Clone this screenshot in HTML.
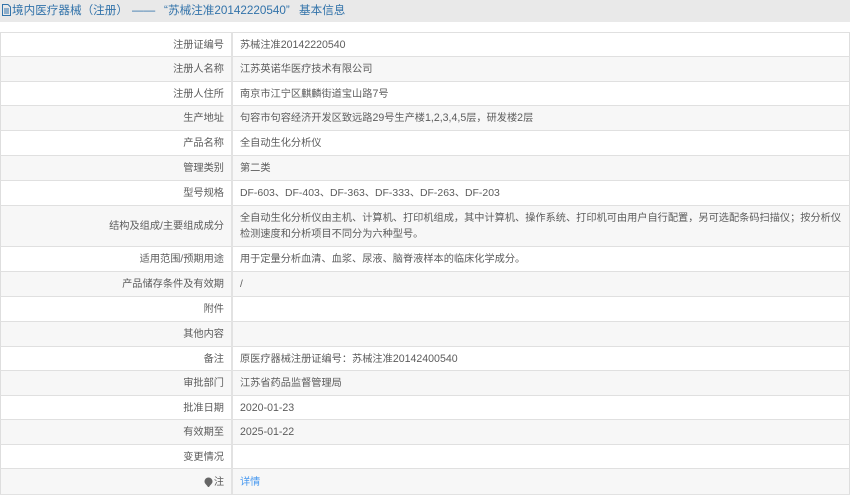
<!DOCTYPE html>
<html lang="zh">
<head>
<meta charset="utf-8">
<style>
html,body{margin:0;padding:0;background:#fff;}
body{width:850px;height:495px;overflow:hidden;position:relative;font-family:"Liberation Sans","Noto Sans CJK SC",sans-serif;color:#5c5c5c;font-size:10.2px;}
#pg{position:absolute;left:0;top:0;width:850px;height:495px;filter:blur(.3px);}
#hd{position:absolute;left:0;top:0;width:850px;height:22px;background:#e9e9e9;}
.t{position:absolute;top:1px;height:19px;line-height:19px;font-size:11.6px;color:#3273aa;white-space:nowrap;}
#ic{position:absolute;left:1px;top:4px;}
.r{position:absolute;left:0;width:850px;box-sizing:border-box;border-top:1px solid #e0e0e0;border-left:1px solid #dedede;border-right:1px solid #dedede;background:#fff;}
.r.e{background:#f7f7f7;}
.l{position:absolute;left:0;width:223px;top:2px;bottom:0;white-space:nowrap;display:flex;align-items:center;justify-content:flex-end;line-height:16px;}
.v{position:absolute;left:239px;width:606px;top:2px;bottom:0;display:flex;align-items:center;line-height:16.5px;white-space:nowrap;}
.v>div{display:block;}
.n{font-size:10.6px;}
.d{font-size:10.45px;}
#dv{position:absolute;left:231px;top:32px;width:1.6px;height:462px;background:#e2e2e2;}
#bt{position:absolute;left:0;top:493.5px;width:850px;height:1.5px;background:#e2e2e2;}
a{color:#4a9af0;text-decoration:none;}
</style>
</head>
<body>
<div id="pg">
<div id="hd"></div>
<svg id="ic" width="11" height="12" viewBox="0 0 11 12" fill="none" stroke="#3273aa" stroke-width="1"><path d="M1.500.5h5.500l2.500 2.500v8.500h-8z"/><path d="M3 5h5M3 7h5M3 9h5"/></svg>
<div class="t" style="left:12px">境内医疗器械（注册）</div>
<div class="t" style="left:132px;letter-spacing:0">——</div>
<div class="t" style="left:164px">“</div>
<div class="t" style="left:168px">苏械注准<span style="font-size:11.700px">20142220540</span>”</div>
<div class="t" style="left:299px">基本信息</div>
<div class="r" style="top:32px;height:24.500px"><div class="l">注册证编号</div><div class="v"><div>苏械注准<span class="n">20142220540</span></div></div></div>
<div class="r e" style="top:56px;height:25px"><div class="l">注册人名称</div><div class="v"><div>江苏英诺华医疗技术有限公司</div></div></div>
<div class="r" style="top:81px;height:24.500px"><div class="l">注册人住所</div><div class="v"><div>南京市江宁区麒麟街道宝山路<span class="n">7</span>号</div></div></div>
<div class="r e" style="top:105px;height:25px"><div class="l">生产地址</div><div class="v"><div>句容市句容经济开发区致远路<span class="n">29</span>号生产楼<span class="n">1,2,3,4,5</span>层，研发楼<span class="n">2</span>层</div></div></div>
<div class="r" style="top:130px;height:25px"><div class="l">产品名称</div><div class="v"><div>全自动生化分析仪</div></div></div>
<div class="r e" style="top:155px;height:25px"><div class="l">管理类别</div><div class="v"><div>第二类</div></div></div>
<div class="r" style="top:180px;height:25px"><div class="l">型号规格</div><div class="v"><div><span class="d">DF-603</span>、<span class="d">DF-403</span>、<span class="d">DF-363</span>、<span class="d">DF-333</span>、<span class="d">DF-263</span>、<span class="d">DF-203</span></div></div></div>
<div class="r e" style="top:205px;height:41px"><div class="l">结构及组成/主要组成成分</div><div class="v"><div>全自动生化分析仪由主机、计算机、打印机组成，其中计算机、操作系统、打印机可由用户自行配置，另可选配条码扫描仪；按分析仪<br>检测速度和分析项目不同分为六种型号。</div></div></div>
<div class="r" style="top:246px;height:25px"><div class="l">适用范围/预期用途</div><div class="v"><div>用于定量分析血清、血浆、尿液、脑脊液样本的临床化学成分。</div></div></div>
<div class="r e" style="top:271px;height:25px"><div class="l">产品储存条件及有效期</div><div class="v"><div>/</div></div></div>
<div class="r" style="top:296px;height:25px"><div class="l">附件</div><div class="v"></div></div>
<div class="r e" style="top:321px;height:25px"><div class="l">其他内容</div><div class="v"></div></div>
<div class="r" style="top:346px;height:24.500px"><div class="l">备注</div><div class="v"><div>原医疗器械注册证编号：苏械注准<span class="n">20142400540</span></div></div></div>
<div class="r e" style="top:370px;height:25px"><div class="l">审批部门</div><div class="v"><div>江苏省药品监督管理局</div></div></div>
<div class="r" style="top:395px;height:24.500px"><div class="l">批准日期</div><div class="v"><div><span class="n">2020-01-23</span></div></div></div>
<div class="r e" style="top:419px;height:25px"><div class="l">有效期至</div><div class="v"><div><span class="n">2025-01-22</span></div></div></div>
<div class="r" style="top:444px;height:24.500px"><div class="l">变更情况</div><div class="v"></div></div>
<div class="r e" style="top:468px;height:26px"><div class="l" style="top:3px"><svg width="9" height="11" viewBox="0 0 9 11" style="margin-right:1px;margin-top:-2px"><path d="M4.500.5a4 4 0 0 1 4 4c0 2-2 3-3.500 5.500h-1C2.500 7.500.5 6.500.5 4.500a4 4 0 0 1 4-4z" fill="#666"/></svg>注</div><div class="v" style="top:3px"><div><a href="#">详情</a></div></div></div>
<div id="dv"></div>
<div id="bt"></div>
</div>
</body>
</html>
